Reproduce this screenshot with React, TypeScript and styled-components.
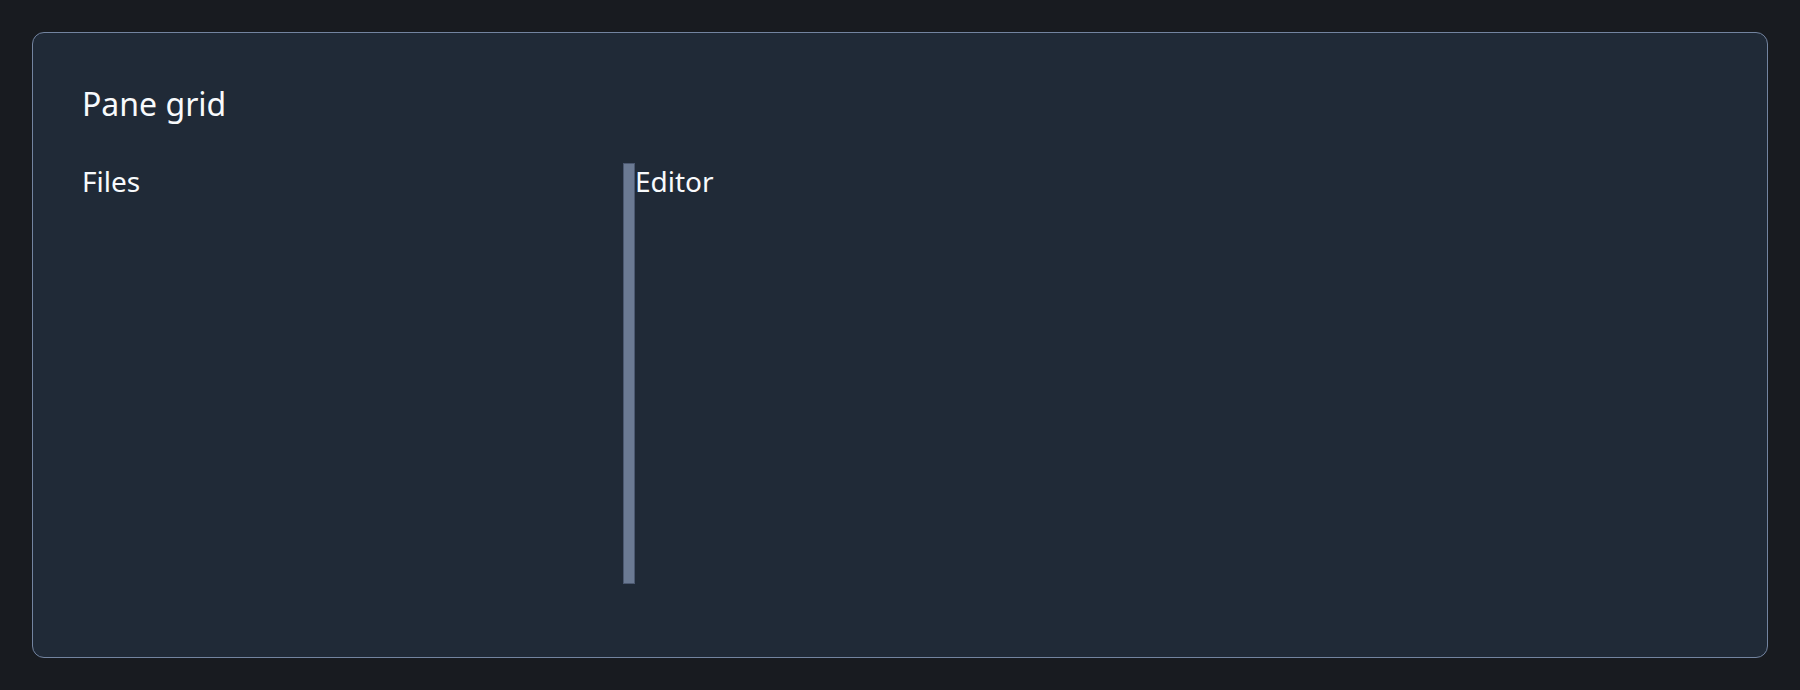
import React from 'react';
import styled, { createGlobalStyle } from 'styled-components';

const GlobalStyle = createGlobalStyle`
  html, body {
    margin: 0;
    padding: 0;
    background: #181b20;
    height: 100%;
  }
  body {
    font-family: "Noto Sans", "Open Sans", sans-serif;
    color: #f8fafc;
  }
`;

const Page = styled.div`
  box-sizing: border-box;
  height: 690px;
  padding: 32px;
`;

const Card = styled.section`
  box-sizing: border-box;
  height: 100%;
  background: #202a37;
  border: 1px solid #7384a0;
  border-radius: 12px;
  padding: 49px 48px 48px 49px;
  display: flex;
  flex-direction: column;
`;

const Title = styled.h2`
  margin: 0 0 37px;
  font-size: 32px;
  font-weight: 400;
  line-height: 1.362;
  color: #f8fafc;
`;

const Grid = styled.div`
  display: flex;
  height: 421px;
`;

const Pane = styled.div<{ $basis: string }>`
  flex: ${({ $basis }) => $basis};
  min-width: 0;
  font-size: 28px;
  line-height: 1.3;
  color: #f8fafc;
`;

const Divider = styled.div`
  box-sizing: border-box;
  width: 12px;
  flex: none;
  background: #6b7a93;
  border: 1px solid #4b5870;
  cursor: col-resize;
`;

export default function App() {
  return (
    <>
      <GlobalStyle />
      <Page>
        <Card>
          <Title>Pane grid</Title>
          <Grid>
            <Pane $basis="0 0 541px">Files</Pane>
            <Divider />
            <Pane $basis="1 1 auto">Editor</Pane>
          </Grid>
        </Card>
      </Page>
    </>
  );
}
